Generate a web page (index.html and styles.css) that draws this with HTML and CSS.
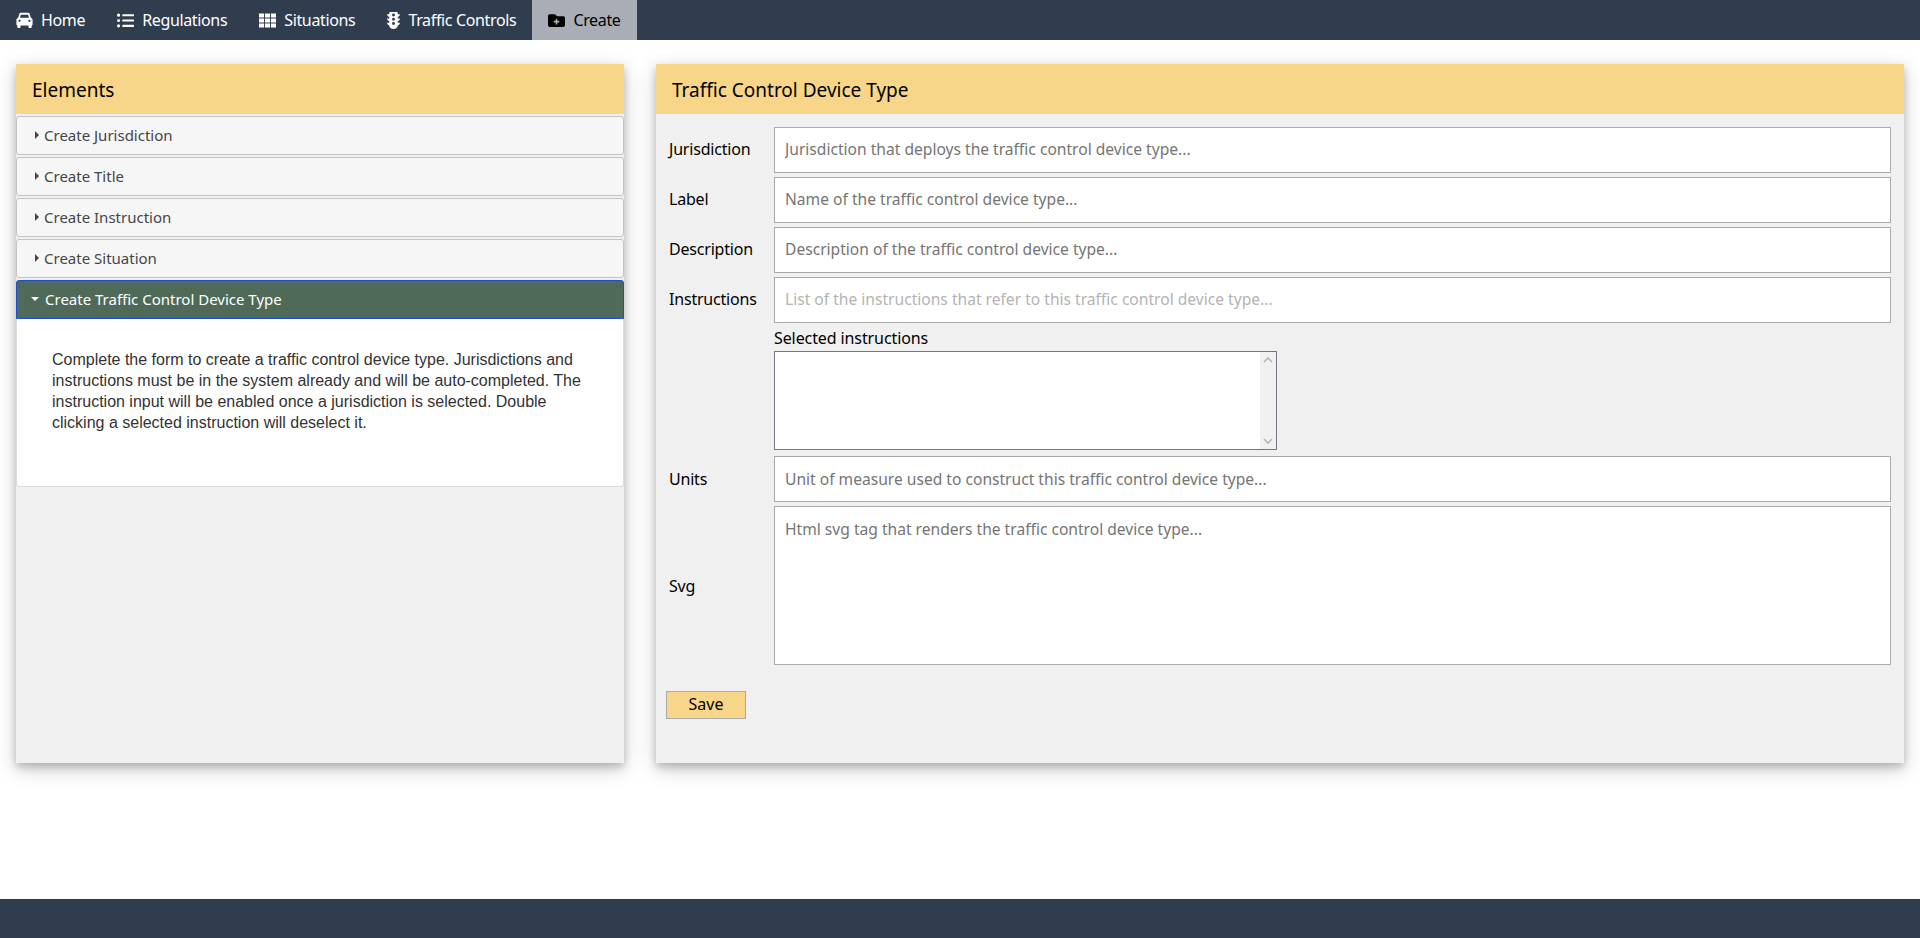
FILE: index.html

```html
<!DOCTYPE html>
<html lang="en">
<head>
    <meta charset="UTF-8">
    <title>Traffic Controls</title>
    <link rel="stylesheet" href="styles.css">
</head>
<body>
    <nav class="topnav">
        <a class="nav-item" href="#">
            <svg class="nav-icon" viewBox="0 0 512 512"><path fill-rule="evenodd" d="M100 60C110 32 132 24 160 24H352C380 24 402 32 412 60L446 176C478 188 500 212 500 250V372C500 390 490 402 472 404V448C472 470 456 484 436 484H412C392 484 376 470 376 448V408H136V448C136 470 120 484 100 484H76C56 484 40 470 40 448V404C22 402 12 390 12 372V250C12 212 34 188 66 176ZM142 92 122 172H390L370 92C368 84 362 80 354 80H158C150 80 144 84 142 92ZM108 232A34 34 0 1 0 108 300 34 34 0 1 0 108 232ZM404 232A34 34 0 1 0 404 300 34 34 0 1 0 404 232Z"/></svg>
            Home
        </a>
        <a class="nav-item" href="#">
            <svg class="nav-icon" viewBox="0 0 512 512"><path d="M48 48a48 48 0 1 0 48 48 48 48 0 0 0-48-48zm0 160a48 48 0 1 0 48 48 48 48 0 0 0-48-48zm0 160a48 48 0 1 0 48 48 48 48 0 0 0-48-48zm448 16H176a16 16 0 0 0-16 16v32a16 16 0 0 0 16 16h320a16 16 0 0 0 16-16v-32a16 16 0 0 0-16-16zm0-320H176a16 16 0 0 0-16 16v32a16 16 0 0 0 16 16h320a16 16 0 0 0 16-16V80a16 16 0 0 0-16-16zm0 160H176a16 16 0 0 0-16 16v32a16 16 0 0 0 16 16h320a16 16 0 0 0 16-16v-32a16 16 0 0 0-16-16z"/></svg>
            Regulations
        </a>
        <a class="nav-item" href="#">
            <svg class="nav-icon" viewBox="0 0 512 512"><path d="M0 48h152v116H0zM180 48h152v116H180zM360 48h152v116H360zM0 198h152v116H0zM180 198h152v116H180zM360 198h152v116H360zM0 348h152v116H0zM180 348h152v116H180zM360 348h152v116H360z"/></svg>
            Situations
        </a>
        <a class="nav-item" href="#">
            <svg class="nav-icon nav-icon-narrow" viewBox="0 0 384 512"><path fill-rule="evenodd" d="M96 0H288C310 0 320 14 320 32V64H384C384 108 358 132 320 140V192H384C384 236 358 260 320 268V320H384C384 364 358 388 320 396V416C320 470 262 512 192 512S64 470 64 416V396C26 388 0 364 0 320H64V268C26 260 0 236 0 192H64V140C26 132 0 108 0 64H64V32C64 14 74 0 96 0ZM192 48A44 44 0 1 0 192 136 44 44 0 1 0 192 48ZM192 176A44 44 0 1 0 192 264 44 44 0 1 0 192 176ZM192 304A44 44 0 1 0 192 392 44 44 0 1 0 192 304Z"/></svg>
            Traffic Controls
        </a>
        <a class="nav-item nav-item-active" href="#">
            <svg class="nav-icon" viewBox="0 0 512 512"><path fill-rule="evenodd" d="M48 64H210L274 128H464C490 128 512 150 512 176V400C512 426 490 448 464 448H48C22 448 0 426 0 400V112C0 86 22 64 48 64ZM232 200V260H172V316H232V376H280V316H340V260H280V200Z"/></svg>
            Create
        </a>
    </nav>

    <main class="content">
        <section class="panel panel-left">
            <h2 class="panel-title">Elements</h2>
            <div class="accordion">
                <h3 class="acc-head"><span class="caret caret-right"></span>Create Jurisdiction</h3>
                <h3 class="acc-head"><span class="caret caret-right"></span>Create Title</h3>
                <h3 class="acc-head"><span class="caret caret-right"></span>Create Instruction</h3>
                <h3 class="acc-head"><span class="caret caret-right"></span>Create Situation</h3>
                <h3 class="acc-head acc-head-open"><span class="caret caret-down"></span>Create Traffic Control Device Type</h3>
                <div class="acc-body">
                    <p>Complete the form to create a traffic control device type. Jurisdictions and instructions must be in the system already and will be auto-completed. The instruction input will be enabled once a jurisdiction is selected. Double clicking a selected instruction will deselect it.</p>
                </div>
            </div>
        </section>

        <section class="panel panel-right">
            <h2 class="panel-title">Traffic Control Device Type</h2>
            <form class="device-form">
                <div class="form-grid">
                    <label for="jurisdiction">Jurisdiction</label>
                    <input type="text" id="jurisdiction" placeholder="Jurisdiction that deploys the traffic control device type...">

                    <label for="label">Label</label>
                    <input type="text" id="label" placeholder="Name of the traffic control device type...">

                    <label for="description">Description</label>
                    <input type="text" id="description" placeholder="Description of the traffic control device type...">

                    <label for="instructions">Instructions</label>
                    <input type="text" id="instructions" class="input-disabled" placeholder="List of the instructions that refer to this traffic control device type...">

                    <div class="selected-box">
                        <div class="selected-label">Selected instructions</div>
                        <div class="listbox">
                            <div class="listbox-items"></div>
                            <div class="listbox-scroll">
                                <svg viewBox="0 0 10 6"><path d="M1 5 5 1 9 5"/></svg>
                                <svg viewBox="0 0 10 6"><path d="M1 1 5 5 9 1"/></svg>
                            </div>
                        </div>
                    </div>

                    <label for="units" class="label-low">Units</label>
                    <input type="text" id="units" class="input-low" placeholder="Unit of measure used to construct this traffic control device type...">

                    <label for="svg" class="label-low">Svg</label>
                    <textarea id="svg" placeholder="Html svg tag that renders the traffic control device type..."></textarea>
                </div>
                <button type="submit" class="save-btn">Save</button>
            </form>
        </section>
    </main>

    <footer class="footer"></footer>
</body>
</html>
```

FILE: styles.css

```css
* {
    box-sizing: border-box;
}
html, body {
    height: 100%;
}
body {
    margin: 0;
    display: flex;
    flex-direction: column;
    font-family: "Noto Sans", sans-serif;
    font-size: 16px;
    color: #000;
    background: #fff;
}

/* top bar */
.topnav {
    display: flex;
    height: 40px;
    flex: none;
    background: #2f3d4e;
}
.nav-item {
    display: flex;
    align-items: center;
    gap: 8px;
    padding: 0 16px;
    color: #fff;
    letter-spacing: -0.35px;
    text-decoration: none;
}
.nav-icon {
    width: 17px;
    height: 17px;
    fill: #fff;
}
.nav-icon-narrow {
    width: 13px;
}
.nav-item-active {
    background: #a9aeb6;
    color: #000;
}
.nav-item-active .nav-icon {
    fill: #000;
}

/* panels */
.content {
    flex: 1;
    display: flex;
    gap: 32px;
    padding: 24px 16px 0;
}
.panel {
    height: 699px;
    background: #f0f0f0;
    box-shadow: 0 4px 8px 0 rgba(0,0,0,0.2), 0 6px 20px 0 rgba(0,0,0,0.19);
}
.panel-left {
    width: 608px;
    flex: none;
}
.panel-right {
    flex: 1;
}
.panel-title {
    height: 50px;
    margin: 0;
    padding: 1px 16px 0;
    line-height: 50px;
    font-size: 19px;
    font-weight: 400;
    background: #f7d68a;
}

/* accordion */
.accordion {
    padding-top: 2px;
}
.acc-head {
    height: 39px;
    margin: 0 0 2px;
    padding: 0 0 2px 18px;
    display: flex;
    align-items: center;
    font-size: 15px;
    font-weight: 400;
    color: #454545;
    background: #f6f6f6;
    border: 1px solid #c5c5c5;
    border-radius: 3px;
}
.acc-head-open {
    margin-bottom: 0;
    padding-left: 14px;
    color: #fff;
    background: #4f6a58;
    border-color: #1b4fd0;
    border-radius: 3px 3px 0 0;
}
.caret {
    flex: none;
    margin-right: 5px;
    width: 0;
    height: 0;
    border-style: solid;
    border-color: transparent;
}
.caret-right {
    border-width: 4px 0 4px 4px;
    border-left-color: #444;
}
.caret-down {
    margin-right: 6px;
    border-width: 4px 4px 0;
    border-top-color: #fff;
}
.acc-body {
    height: 168px;
    padding: 30px 35px 0;
    font-family: "Liberation Sans", Arial, sans-serif;
    font-size: 16px;
    line-height: 21px;
    color: #333;
    background: #fff;
    border: 1px solid #ddd;
    border-top: 0;
    border-radius: 0 0 3px 3px;
}
.acc-body p {
    margin: 0;
}

/* form */
.device-form {
    padding: 13px 13px 0 10px;
}
.form-grid {
    display: grid;
    grid-template-columns: 108px 1fr;
    row-gap: 4px;
    align-items: center;
}
.form-grid label {
    padding: 0 0 2px 3px;
    letter-spacing: -0.2px;
}
.form-grid .label-low {
    padding-bottom: 0;
}
input, textarea {
    width: 100%;
    display: block;
    margin: 0;
    padding: 0 10px 2px;
    font: inherit;
    font-size: 15.6px;
    color: #000;
    background: #fff;
    border: 1px solid #aaa;
    border-radius: 0;
    outline: 0;
}
input {
    height: 46px;
}
.input-low {
    padding-bottom: 0;
}
textarea {
    height: 159px;
    padding-top: 11px;
    resize: none;
}
::placeholder {
    color: #757575;
    opacity: 1;
}
.input-disabled::placeholder {
    color: #b4b4b4;
}
.selected-box {
    grid-column: 2;
    padding-bottom: 2px;
}
.selected-label {
    height: 24px;
    line-height: 22px;
    letter-spacing: -0.1px;
}
.listbox {
    display: flex;
    width: 503px;
    height: 99px;
    background: #fff;
    border: 1px solid #767685;
}
.listbox-items {
    flex: 1;
}
.listbox-scroll {
    width: 16px;
    padding: 5px 3px;
    display: flex;
    flex-direction: column;
    justify-content: space-between;
    background: #f1f1f1;
}
.listbox-scroll svg {
    width: 10px;
    height: 6px;
    fill: none;
    stroke: #b5b5b5;
    stroke-width: 1.6;
}
.save-btn {
    display: block;
    width: 80px;
    height: 28px;
    margin-top: 26px;
    padding: 0 0 2px;
    font: inherit;
    color: #000;
    background: #f7d68a;
    border: 1px solid #aaa;
}

.footer {
    height: 39px;
    flex: none;
    background: #2f3d4e;
}
```
